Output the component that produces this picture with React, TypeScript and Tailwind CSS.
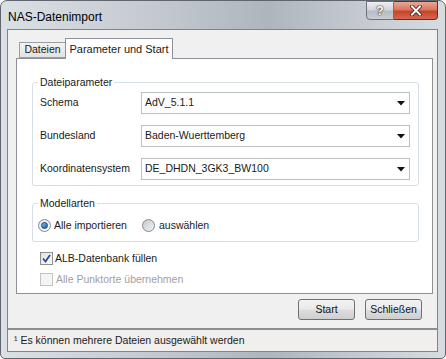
import React from 'react';

const Combo = ({ value }: { value: string }) => (
  <div className="flex h-[22px] w-[269px] items-center justify-between border border-[#bcc0c5] bg-white pl-[3px] pr-[4px]">
    <span>{value}</span>
    <svg width="8" height="5" viewBox="0 0 8 5">
      <path d="M0 0 L8 0 L4 4.5 Z" fill="#111" />
    </svg>
  </div>
);

const Radio = ({ checked }: { checked?: boolean }) => (
  <span
    className={`flex h-[13px] w-[13px] items-center justify-center rounded-full border border-[#7f8a96] ${
      checked ? 'bg-gradient-to-br from-[#e4e7ea] to-[#fbfbfb]' : 'bg-gradient-to-br from-[#c6cacf] to-[#f2f2f2]'
    }`}
  >
    {checked && (
      <span className="h-[7px] w-[7px] rounded-full border border-[#1c3f6e] bg-gradient-to-br from-[#7cc2ec] to-[#1d5aa3]" />
    )}
  </span>
);

const Check = ({ checked, disabled }: { checked?: boolean; disabled?: boolean }) => (
  <span
    className={`flex h-[13px] w-[13px] items-center justify-center border ${
      disabled ? 'border-[#c4c4c4] bg-[#f4f4f4]' : 'border-[#8e8f8f] bg-gradient-to-br from-[#e0e1e3] to-[#fbfbfb]'
    }`}
  >
    {checked && (
      <svg width="9" height="9" viewBox="0 0 9 9">
        <path d="M1 4.5 L3.5 7.5 L8 1" fill="none" stroke="#2f4d89" strokeWidth="1.8" />
      </svg>
    )}
  </span>
);

const Button = ({ label }: { label: string }) => (
  <button className="h-[21px] w-[57px] rounded-[3px] border border-[#707070] bg-[linear-gradient(#f2f2f2_0%,#ebebeb_48%,#dddddd_52%,#cfcfcf_100%)] text-[#111]">
    {label}
  </button>
);

export default function App() {
  return (
    <div className="h-[359px] w-[446px] bg-white font-['Liberation_Sans',Arial,sans-serif] text-[10.5px] text-[#1a1a1a]">
      <div className="flex h-[359px] w-[446px] flex-col rounded-t-[7px] rounded-b-[5px] border border-[#5f666e] bg-[linear-gradient(90deg,#dbe0e5_0%,#c3c9cf_35%,#aeb5bd_60%,#c9ced4_85%,#d7dce1_100%)]">
        <div className="flex h-[28px] items-start justify-between">
          <span className="pl-[7px] pt-[7px] text-[12px] text-black">NAS-Datenimport</span>
          <div className="mr-[7px] flex">
            <div className="flex h-[19px] w-[28px] items-center justify-center rounded-bl-[4px] border border-[#6b7178] bg-[linear-gradient(#eef0f2_0%,#d2d6da_45%,#b6bcc2_55%,#c9ced3_100%)] text-[12px] font-bold text-white [text-shadow:0_0_2px_#222,0_0_1px_#222]">
              ?
            </div>
            <div className="flex h-[19px] w-[44px] items-center justify-center rounded-br-[4px] border border-l-0 border-[#6b2a1f] bg-[linear-gradient(#eaa896_0%,#d9765f_45%,#c7432a_55%,#d4684f_100%)]">
              <svg width="12" height="11" viewBox="0 0 12 11">
                <path d="M2 1.5 L10 9.5 M10 1.5 L2 9.5" stroke="#3b1a14" strokeWidth="3.6" strokeLinecap="square" />
                <path d="M2 1.5 L10 9.5 M10 1.5 L2 9.5" stroke="#ffffff" strokeWidth="2" strokeLinecap="square" />
              </svg>
            </div>
          </div>
        </div>

        <div className="mb-[6px] ml-[6px] mr-[7px] flex flex-1 flex-col border border-[#7d848b] bg-[#f0f0f0]">
          <div className="ml-[11px] mt-[8px] flex h-[20px] items-end">
            <div className="flex h-[16px] w-[46px] items-center justify-center border border-r-0 border-[#9a9da4] bg-[linear-gradient(#f3f3f3,#e2e2e2)]">
              Dateien
            </div>
            <div className="relative z-10 -mb-px flex h-[21px] w-[108px] items-start justify-center border border-b-0 border-[#8e9199] bg-white pt-[2px] text-[11px]">
              Parameter und Start
            </div>
          </div>

          <div className="ml-[8px] flex h-[236px] w-[417px] flex-col border border-[#8e9199] bg-white">
            <fieldset className="ml-[15px] mt-[17px] w-[387px] rounded-[3px] border border-[#d5dfe5] pb-[5px]">
              <legend className="ml-[5px] px-[2px] leading-[12px]">Dateiparameter</legend>
              <div className="mt-[4px] flex flex-col gap-[11px] pl-[7px]">
                <div className="flex items-center">
                  <span className="w-[101px]">Schema</span>
                  <Combo value="AdV_5.1.1" />
                </div>
                <div className="flex items-center">
                  <span className="w-[101px]">Bundesland</span>
                  <Combo value="Baden-Wuerttemberg" />
                </div>
                <div className="flex items-center">
                  <span className="w-[101px]">Koordinatensystem</span>
                  <Combo value="DE_DHDN_3GK3_BW100" />
                </div>
              </div>
            </fieldset>

            <fieldset className="ml-[15px] mt-[11px] w-[387px] rounded-[3px] border border-[#d5dfe5] pb-[9px]">
              <legend className="ml-[5px] px-[2px] leading-[12px]">Modellarten</legend>
              <div className="mt-[10px] flex h-[13px] items-center pl-[5px]">
                <Radio checked />
                <span className="ml-[3px]">Alle importieren</span>
                <span className="ml-[15px]">
                  <Radio />
                </span>
                <span className="ml-[4px]">auswählen</span>
              </div>
            </fieldset>

            <div className="ml-[23px] mt-[10px] flex flex-col gap-[8px]">
              <div className="flex h-[13px] items-center">
                <Check checked />
                <span className="ml-[2px]">ALB-Datenbank füllen</span>
              </div>
              <div className="flex h-[13px] items-center text-[#a0a0a0]">
                <Check disabled />
                <span className="ml-[3px]">Alle Punktorte übernehmen</span>
              </div>
            </div>
          </div>

          <div className="mt-[5px] flex justify-end gap-[10px] pr-[15px]">
            <Button label="Start" />
            <Button label="Schließen" />
          </div>

          <div className="mt-[8px] flex flex-1 items-center border-t-2 border-[#8a8d91] bg-[#f1eeee] pl-[6px]">
            <span>¹ Es können mehrere Dateien ausgewählt werden</span>
          </div>
        </div>
      </div>
    </div>
  );
}
